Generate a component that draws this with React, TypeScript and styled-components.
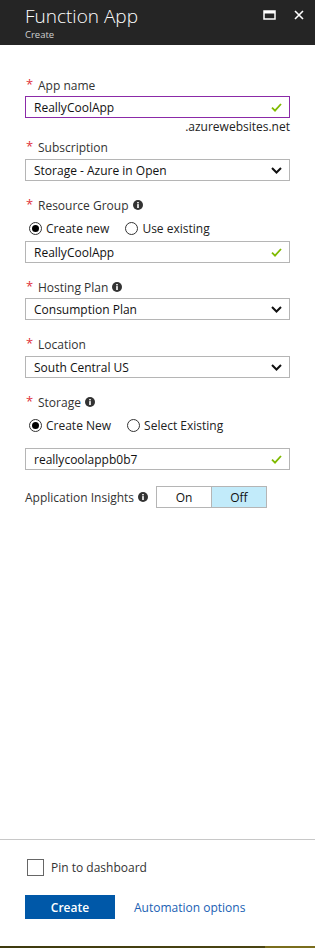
import React from "react";
import styled, { createGlobalStyle } from "styled-components";

const GlobalStyle = createGlobalStyle`
  html, body {
    margin: 0;
    padding: 0;
    background: #ffffff;
  }
  body {
    font-family: "Open Sans", "Noto Sans", "Liberation Sans", sans-serif;
    color: #000;
  }
`;

const Page = styled.div`
  width: 315px;
  height: 948px;
  display: flex;
  flex-direction: column;
  background: #fff;
  overflow: hidden;
`;

const Header = styled.div`
  height: 45px;
  background: #252525;
  display: flex;
  align-items: flex-start;
  padding: 0 11px 0 25px;
  box-sizing: border-box;
`;

const TitleBlock = styled.div`
  flex: 1;
  display: flex;
  flex-direction: column;
  padding-top: 3px;
`;

const Title = styled.div`
  color: #fff;
  font-size: 19px;
  font-weight: 300;
  line-height: 26px;
`;

const Subtitle = styled.div`
  color: #d0d0d0;
  font-size: 9.5px;
  line-height: 12px;
`;

const HeaderIcons = styled.div`
  display: flex;
  align-items: center;
  gap: 18px;
  padding-top: 10px;
`;

const Form = styled.div`
  display: flex;
  flex-direction: column;
  padding: 0 25px;
`;

const Label = styled.div<{ $top: number }>`
  display: flex;
  align-items: center;
  margin-top: ${({ $top }) => $top}px;
  height: 16px;
  font-size: 12px;
  color: #333;
  gap: 4px;
`;

const Star = styled.span`
  color: #e0303a;
  font-size: 13px;
  width: 7px;
  margin-left: 1px;
  margin-right: 1px;
  line-height: 10px;
  align-self: flex-start;
  padding-top: 2px;
`;

const Box = styled.div<{ $top: number; $active?: boolean }>`
  margin-top: ${({ $top }) => $top}px;
  height: 22px;
  box-sizing: border-box;
  border: 1px solid ${({ $active }) => ($active ? "#8b2aa8" : "#b5b5b5")};
  display: flex;
  align-items: center;
  padding: 0 7px 0 8px;
  font-size: 12px;
  color: #111;
`;

const BoxText = styled.span`
  flex: 1;
  white-space: nowrap;
`;

const Hint = styled.div`
  text-align: right;
  font-size: 12px;
  color: #222;
  line-height: 16px;
  margin-top: 1px;
`;

const RadioRow = styled.div<{ $top: number }>`
  display: flex;
  align-items: center;
  margin-top: ${({ $top }) => $top}px;
  height: 16px;
  padding-left: 4px;
  gap: 16px;
`;

const RadioOption = styled.label`
  display: flex;
  align-items: center;
  gap: 4px;
  font-size: 12px;
  color: #222;
`;

const RadioCircle = styled.span<{ $checked?: boolean }>`
  width: 11px;
  height: 11px;
  border-radius: 50%;
  border: 1px solid #333;
  display: flex;
  align-items: center;
  justify-content: center;
  background: #fff;
  &::after {
    content: "";
    width: 7px;
    height: 7px;
    border-radius: 50%;
    background: ${({ $checked }) => ($checked ? "#000" : "transparent")};
  }
`;

const InsightsRow = styled.div`
  display: flex;
  align-items: center;
  margin-top: 16px;
`;

const InsightsLabel = styled.div`
  display: flex;
  align-items: center;
  gap: 4px;
  font-size: 12px;
  color: #333;
  width: 131px;
`;

const Toggle = styled.div`
  display: flex;
  border: 1px solid #b5b5b5;
  height: 22px;
  box-sizing: border-box;
`;

const ToggleCell = styled.div<{ $on?: boolean }>`
  width: 54px;
  display: flex;
  align-items: center;
  justify-content: center;
  font-size: 12px;
  color: #111;
  background: ${({ $on }) => ($on ? "#c2ebfa" : "#fff")};
  & + & {
    border-left: 1px solid #b5b5b5;
  }
`;

const Spacer = styled.div`
  flex: 1;
`;

const Footer = styled.div`
  border-top: 1px solid #c8c8c8;
  padding: 19px 25px 0;
  height: 107px;
  box-sizing: border-box;
  display: flex;
  flex-direction: column;
`;

const CheckRow = styled.label`
  display: flex;
  align-items: center;
  gap: 7px;
  font-size: 12px;
  color: #333;
  padding-left: 2px;
`;

const CheckBox = styled.span`
  width: 15px;
  height: 15px;
  border: 1px solid #666;
  background: #fff;
`;

const ActionRow = styled.div`
  display: flex;
  align-items: center;
  gap: 19px;
  margin-top: 19px;
`;

const PrimaryButton = styled.button`
  width: 90px;
  height: 24px;
  border: none;
  background: #0058a8;
  color: #fff;
  font-family: inherit;
  font-size: 12px;
  font-weight: 600;
  padding: 0;
`;

const LinkText = styled.a`
  color: #1a5fb4;
  font-size: 12px;
  text-decoration: none;
`;

const Desktop = styled.div`
  height: 2px;
  flex-shrink: 0;
  background: linear-gradient(
    to right,
    #3e3a0e 0,
    #4a4412 84%,
    #7a6d1c 84%,
    #7a6d1c 100%
  );
`;

function InfoIcon() {
  return (
    <svg width="10" height="10" viewBox="0 0 10 10">
      <circle cx="5" cy="5" r="5" fill="#333" />
      <rect x="4.2" y="4.1" width="1.6" height="3.9" fill="#fff" />
      <rect x="4.2" y="2" width="1.6" height="1.4" fill="#fff" />
    </svg>
  );
}

function Check() {
  return (
    <svg width="11" height="9" viewBox="0 0 11 9">
      <path d="M1 4.6 L4 7.6 L10 1" fill="none" stroke="#7fba00" strokeWidth="1.8" />
    </svg>
  );
}

function Chevron() {
  return (
    <svg width="11" height="7" viewBox="0 0 11 7">
      <path d="M1 1 L5.5 5.5 L10 1" fill="none" stroke="#111" strokeWidth="2" />
    </svg>
  );
}

function MaximizeIcon() {
  return (
    <svg width="13" height="10" viewBox="0 0 13 10">
      <rect x="1" y="1" width="11" height="8" fill="none" stroke="#fff" strokeWidth="1.5" />
      <rect x="1" y="1" width="11" height="2.5" fill="#fff" />
    </svg>
  );
}

function CloseIcon() {
  return (
    <svg width="10" height="10" viewBox="0 0 10 10">
      <path d="M1 1 L9 9 M9 1 L1 9" stroke="#fff" strokeWidth="1.6" />
    </svg>
  );
}

function FieldLabel({
  text,
  top,
  info,
}: {
  text: string;
  top: number;
  info?: boolean;
}) {
  return (
    <Label $top={top}>
      <Star>*</Star>
      <span>{text}</span>
      {info && <InfoIcon />}
    </Label>
  );
}

export default function App() {
  return (
    <Page>
      <GlobalStyle />
      <Header>
        <TitleBlock>
          <Title>Function App</Title>
          <Subtitle>Create</Subtitle>
        </TitleBlock>
        <HeaderIcons>
          <MaximizeIcon />
          <CloseIcon />
        </HeaderIcons>
      </Header>

      <Form>
        <FieldLabel text="App name" top={32} />
        <Box $top={3} $active>
          <BoxText>ReallyCoolApp</BoxText>
          <Check />
        </Box>
        <Hint>.azurewebsites.net</Hint>

        <FieldLabel text="Subscription" top={4} />
        <Box $top={4}>
          <BoxText>Storage - Azure in Open</BoxText>
          <Chevron />
        </Box>

        <FieldLabel text="Resource Group" top={16} info />
        <RadioRow $top={7}>
          <RadioOption>
            <RadioCircle $checked />
            Create new
          </RadioOption>
          <RadioOption>
            <RadioCircle />
            Use existing
          </RadioOption>
        </RadioRow>
        <Box $top={5}>
          <BoxText>ReallyCoolApp</BoxText>
          <Check />
        </Box>

        <FieldLabel text="Hosting Plan" top={16} info />
        <Box $top={3}>
          <BoxText>Consumption Plan</BoxText>
          <Chevron />
        </Box>

        <FieldLabel text="Location" top={16} />
        <Box $top={4}>
          <BoxText>South Central US</BoxText>
          <Chevron />
        </Box>

        <FieldLabel text="Storage" top={16} info />
        <RadioRow $top={7}>
          <RadioOption>
            <RadioCircle $checked />
            Create New
          </RadioOption>
          <RadioOption>
            <RadioCircle />
            Select Existing
          </RadioOption>
        </RadioRow>
        <Box $top={15}>
          <BoxText>reallycoolappb0b7</BoxText>
          <Check />
        </Box>

        <InsightsRow>
          <InsightsLabel>
            Application Insights <InfoIcon />
          </InsightsLabel>
          <Toggle>
            <ToggleCell>On</ToggleCell>
            <ToggleCell $on>Off</ToggleCell>
          </Toggle>
        </InsightsRow>
      </Form>

      <Spacer />

      <Footer>
        <CheckRow>
          <CheckBox />
          Pin to dashboard
        </CheckRow>
        <ActionRow>
          <PrimaryButton>Create</PrimaryButton>
          <LinkText href="#">Automation options</LinkText>
        </ActionRow>
      </Footer>
      <Desktop />
    </Page>
  );
}
